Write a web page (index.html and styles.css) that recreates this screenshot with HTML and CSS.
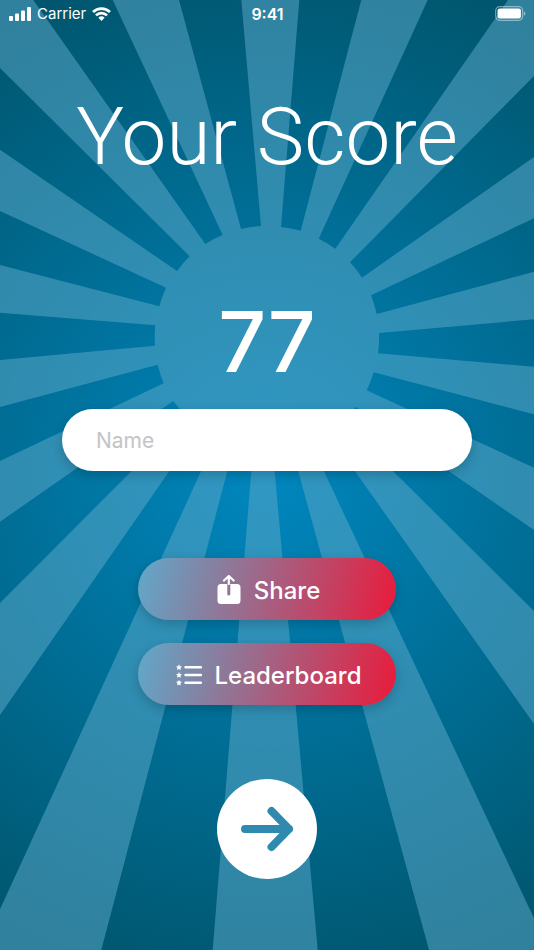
FILE: index.html
```html
<!DOCTYPE html>
<html lang="en">
<head>
  <meta charset="UTF-8" />
  <meta name="viewport" content="width=device-width, initial-scale=1" />
  <title>Your Score</title>
  <link rel="stylesheet" href="styles.css">
</head>
<body>
  <!-- Sunburst background -->
  <svg class="sunburst" viewBox="0 0 534 950" preserveAspectRatio="xMidYMid slice" aria-hidden="true">
    <path fill-rule="evenodd" d="M0 0H534V950H0Z
      M179 0L241 229A112 112 0 0 1 261 226L241.3 0Z
      M33.3 0L205.3 244A112 112 0 0 1 222.7 235L112.7 0Z
      M0 68L189.7 256.3A112 112 0 0 0 177 271L0 149.7Z
      M0 211L166 287.7A112 112 0 0 0 159.3 306.3L0 265Z
      M0 312.7L155.3 325.3A112 112 0 0 0 155 345.7L0 360Z
      M0 407L157.7 364.7A112 112 0 0 0 163.7 383.3L0 461Z
      M0 521.7L173.3 401A112 112 0 0 0 186.5 416L0 603Z
      M0 715L200 427A112 112 0 0 0 216.3 438L0 909.3Z
      M101.3 950L234.2 445A112 112 0 0 0 253.1 449L212.7 950Z
      M317.7 950L272.7 449.5A112 112 0 0 0 291.4 446L429 950Z
      M534 918.3L310 441.6A112 112 0 0 0 327.5 432.4L534 724Z
      M534 611L342 420.4A112 112 0 0 0 356 407L534 530Z
      M534 414.3L373.7 372.3A112 112 0 0 1 366.7 390.3L534 467.7Z
      M534 319.3L379 333A112 112 0 0 1 378 353.3L534 366.7Z
      M534 218.3L371 295.3A112 112 0 0 1 376.7 314L534 271.7Z
      M534 76L350 262.3A112 112 0 0 1 362 277.7L534 157Z
      M427.7 0L318.7 238.7A112 112 0 0 1 335.3 248.7L508 0Z
      M299.3 0L281 227A112 112 0 0 1 300.7 230.7L361.3 0Z" />
  </svg>

  <header class="status-bar">
    <div class="status-left">
      <svg width="22" height="14" viewBox="0 0 22 14" aria-hidden="true">
        <rect x="0" y="9" width="4" height="5" rx="1" />
        <rect x="6" y="6.500" width="4" height="7.500" rx="1" />
        <rect x="12" y="3.500" width="4" height="10.500" rx="1" />
        <rect x="18" y="0" width="4" height="14" rx="1" />
      </svg>
      <span>Carrier</span>
      <svg width="19" height="14" viewBox="0 0 19 14" aria-hidden="true">
        <g fill="none" stroke="#fff" stroke-width="2.700">
          <path d="M1 5A12.200 12.200 0 0 1 18 5" />
          <path d="M4 8.400A7.800 7.800 0 0 1 15 8.400" />
        </g>
        <path d="M6.400 10.800A4.500 4.500 0 0 1 12.600 10.800L9.500 14Z" />
      </svg>
    </div>
    <div class="status-time">9:41</div>
    <div class="status-right">
      <svg width="31" height="15" viewBox="0 0 31 15" aria-hidden="true">
        <rect x="0.700" y="0.700" width="27" height="13.600" rx="4" fill="none" stroke="#fff" stroke-opacity="0.450" stroke-width="1.200" />
        <rect x="2.500" y="2.500" width="23.400" height="10" rx="2.200" />
        <path d="M29 5.200C30.800 6 30.800 9 29 9.800Z" fill-opacity="0.500" />
      </svg>
    </div>
  </header>

  <main class="container">
    <h1>Your Score</h1>
    <div class="score">77</div>

    <input class="name-input" type="text" placeholder="Name" aria-label="Name" />

    <div class="actions">
      <button class="pill-btn" type="button">
        <svg width="24" height="30" viewBox="0 0 24 30" aria-hidden="true">
          <path fill-rule="evenodd" d="M4 9H10.300V19A1.500 1.500 0 0 0 13.300 19V9H20A3.500 3.500 0 0 1 23.500 12.500V25.500A3.500 3.500 0 0 1 20 29H4A3.500 3.500 0 0 1 0.500 25.500V12.500A3.500 3.500 0 0 1 4 9Z" />
          <path d="M11.800 9V1.500M7 5.500L11.800 1L16.600 5.500" fill="none" stroke="#fff" stroke-width="2.200" stroke-linecap="round" stroke-linejoin="round" />
        </svg>
        Share
      </button>
      <button class="pill-btn" type="button">
        <svg width="26" height="22" viewBox="0 0 26 22" aria-hidden="true">
          <defs>
            <path id="star" d="M0 -3L0.900 -1.100L3 -0.900L1.500 0.600L1.900 2.700L0 1.700L-1.900 2.700L-1.500 0.600L-3 -0.900L-0.900 -1.100Z" />
          </defs>
          <use href="#star" x="3" y="3.300" />
          <use href="#star" x="3" y="11" />
          <use href="#star" x="3" y="18.700" />
          <path d="M9.500 3.300H25M9.500 11H25M9.500 18.700H25" stroke="#fff" stroke-width="2.400" stroke-linecap="round" />
        </svg>
        Leaderboard
      </button>
    </div>

    <button class="next-btn" type="button" aria-label="Next">
      <svg width="100" height="100" viewBox="0 0 100 100" aria-hidden="true">
        <path d="M28 50H72M54.500 32L72 50L54.500 68" />
      </svg>
    </button>
  </main>
</body>
</html>
```
FILE: styles.css
```css
:root {
  --color-center: #0087bf;
  --color-edge: #00566e;
  --color-ray: #5aa9c9;
  --color-red: #ea1a3b;
  --color-placeholder: #c4c4c6;
  --font-family: Inter, "Liberation Sans", sans-serif;
  --font-title: Roboto, "Liberation Sans", sans-serif;
  --shadow: 0 4px 12px rgba(0, 0, 0, 0.2);
}

*, *::before, *::after {
  box-sizing: border-box;
}

body {
  margin: 0;
  min-height: 100vh;
  display: flex;
  flex-direction: column;
  font-family: var(--font-family);
  color: #fff;
  background: radial-gradient(circle 520px at center, var(--color-center), var(--color-edge));
  -webkit-font-smoothing: antialiased;
}

button, input {
  border: none;
  font-family: inherit;
}

button {
  cursor: pointer;
}

svg {
  fill: #fff;
}

.sunburst {
  position: absolute;
  inset: 0;
  z-index: -1;
  width: 100%;
  height: 100%;
  fill: var(--color-ray);
  fill-opacity: 0.53;
}

/* Status bar */
.status-bar {
  display: grid;
  grid-template-columns: 1fr auto 1fr;
  align-items: center;
  height: 27px;
  padding: 0 8px 0 9px;
  font-size: 15px;
  line-height: 20px;
}

.status-left {
  display: flex;
  align-items: center;
  gap: 6px;
}

.status-time {
  font-size: 16px;
  font-weight: 600;
}

.status-right {
  display: flex;
  justify-content: flex-end;
}

/* Score screen */
.container {
  flex-grow: 1;
  display: flex;
  flex-direction: column;
  align-items: center;
  padding: 68px 62px 70px;
}

h1 {
  margin: 0;
  font-family: var(--font-title);
  font-size: 80px;
  font-weight: 300;
  line-height: 84px;
  white-space: nowrap;
}

.score {
  margin-top: 121px;
  font-size: 84px;
  font-weight: 500;
  line-height: 84px;
}

.name-input {
  width: 100%;
  height: 62px;
  margin-top: 25px;
  padding: 0 34px;
  border-radius: 31px;
  background: #fff;
  box-shadow: var(--shadow);
  font-size: 21px;
}

.name-input::placeholder {
  color: var(--color-placeholder);
  opacity: 1;
}

.actions {
  display: flex;
  flex-direction: column;
  gap: 23px;
  margin-top: 87px;
}

.pill-btn {
  display: flex;
  align-items: center;
  justify-content: center;
  gap: 13px;
  width: 258px;
  height: 62px;
  padding: 2px 6px 0 9px;
  border-radius: 31px;
  background: linear-gradient(104deg, #5fa9ca, var(--color-red));
  box-shadow: var(--shadow);
  color: #fff;
  font-size: 24px;
  font-weight: 500;
}

/* Next button */
.next-btn {
  width: 100px;
  height: 100px;
  margin-top: 74px;
  padding: 0;
  border-radius: 50%;
  background: #fff;
}

.next-btn svg {
  display: block;
  fill: none;
  stroke: #308ab0;
  stroke-width: 8;
  stroke-linecap: round;
  stroke-linejoin: round;
}
```
